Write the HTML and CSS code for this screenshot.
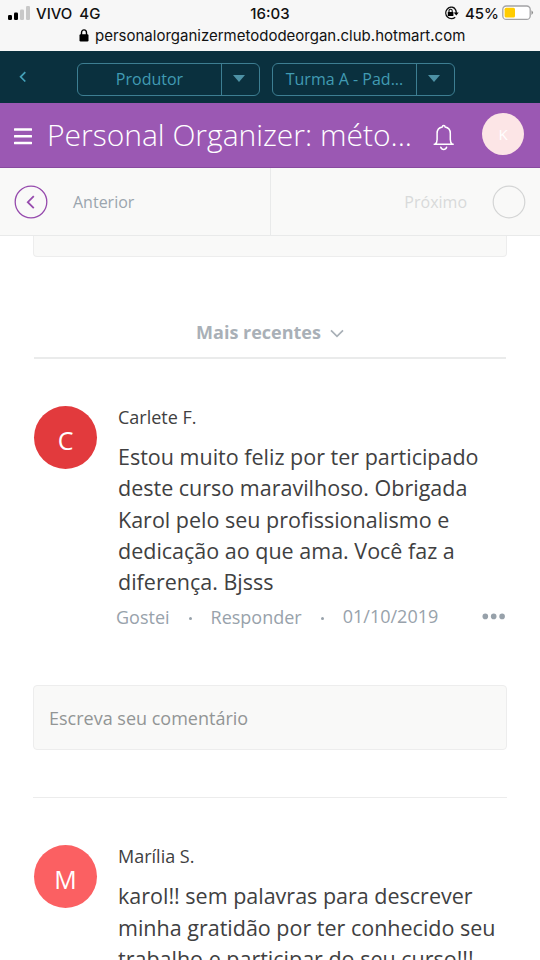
FILE: index.html
```html
<!DOCTYPE html>
<html lang="pt-BR">
<head>
<meta charset="utf-8">
<title>Personal Organizer</title>
<link rel="stylesheet" href="styles.css">
</head>
<body>
<header class="phone">
  <div class="status">
    <div class="carrier">
      <svg width="24" height="14" viewBox="0 0 24 14"><rect x="0" y="9" width="4" height="5" rx="1.2"/><rect x="6" y="6.5" width="4" height="7.5" rx="1.2"/><g fill="#c8c8c8"><rect x="12" y="3.5" width="4" height="10.5" rx="1.2"/><rect x="18" y="0" width="4" height="14" rx="1.2"/></g></svg>
      <span class="carrier-name">VIVO</span><span class="network">4G</span>
    </div>
    <time class="clock">16:03</time>
    <div class="power">
      <svg width="15" height="14" viewBox="0 0 15 14"><path d="M10.6 2.1A5.7 5.7 0 1 0 11.2 11.2M8 1.1A5.8 5.8 0 0 1 12.2 7.2" fill="none" stroke="#111" stroke-width="1.4"/><path d="M9.7 6.5h5l-2.4 3z"/><rect x="3.8" y="6" width="5.6" height="4" rx=".6"/><path d="M5 6V4.8a1.6 1.6 0 0 1 3.2 0V6" fill="none" stroke="#111" stroke-width="1.1"/></svg>
      <span class="percent">45%</span>
      <svg class="battery" width="32" height="16" viewBox="0 0 32 16"><rect x=".8" y="1" width="27.4" height="13.4" rx="3.5" fill="#fff" stroke="#a3a3a5" stroke-width="1.3"/><rect x="2.6" y="2.8" width="10.4" height="9.8" rx="1.5" fill="#fc0"/><path d="M29.5 5.2q3 2.4 0 4.8z" fill="#888"/></svg>
    </div>
  </div>
  <div class="address">
    <svg width="10" height="13" viewBox="0 0 10 13"><rect x=".5" y="5.3" width="9" height="7.2" rx="1.2"/><path d="M2.5 6V3.8a2.5 2.9 0 0 1 5 0V6" fill="none" stroke="#000" stroke-width="1.4"/></svg>
    <span class="url">personalorganizermetododeorgan.club.hotmart.com</span>
  </div>
</header>
<div class="switcher">
  <svg class="back" width="8" height="12" viewBox="0 0 8 12"><path d="M6.3 1.2L1.6 5.8L6.3 10.5" fill="none" stroke="#43a0b8" stroke-width="1.7"/></svg>
  <div class="select"><span class="select-label"><span class="role">Produtor</span></span><span class="arrow"><i></i></span></div>
  <div class="select second"><span class="select-label"><span class="group">Turma A - Pad...</span></span><span class="arrow"><i></i></span></div>
</div>
<div class="titlebar">
  <svg class="menu" width="18" height="17" viewBox="0 0 18 17"><path d="M.8 1.5h16.4M.8 8.3h16.4M.8 15h16.4" stroke="#fff" stroke-width="2.5" stroke-linecap="round"/></svg>
  <h1 class="title"><span>Personal Organizer: méto...</span></h1>
  <svg class="bell" width="22" height="27" viewBox="0 0 22 27" fill="none" stroke="#fff" stroke-width="1.5" stroke-linejoin="round" stroke-linecap="round"><path d="M1.2 20.2h19M2.2 20c1.4-1 1.9-2.3 1.9-4.5V9.3C4.1 6 6.3 3.5 9.3 3c.1-2 2.7-2 2.8 0 3 .5 5.2 3 5.2 6.3v6.2c0 2.2.5 3.5 1.9 4.5M7.8 23.3c.9 3 4.9 3 5.8 0"/></svg>
  <div class="user">K</div>
</div>
<nav class="pager">
  <div class="previous"><svg width="34" height="34" viewBox="0 0 34 34" fill="none" stroke="#964bad"><circle cx="17" cy="17" r="15.8" stroke-width="1.3"/><path d="M19.8 11.2l-6 6 6 6" stroke-width="1.8"/></svg><span class="nav-text prev-text">Anterior</span></div>
  <div class="next"><span class="nav-text next-text">Próximo</span><svg width="34" height="34" viewBox="0 0 34 34" fill="none"><circle cx="17" cy="17" r="15.8" stroke="#d4d5d5" stroke-width="1.2"/></svg></div>
</nav>
<main class="content">
  <div class="field-end"></div>
  <div class="sort"><span class="sort-label">Mais recentes</span><svg width="14" height="9" viewBox="0 0 14 9"><path d="M1 1.4l6 6 6-6" fill="none" stroke="#a9b0b7" stroke-width="1.7"/></svg></div>
  <article class="comment">
    <div class="avatar">C</div>
    <div class="body">
      <h2 class="name"><span class="n1">Carlete F.</span></h2>
      <p class="text"><span class="a1">Estou muito feliz por ter participado</span><br><span class="a2">deste curso maravilhoso. Obrigada</span><br><span class="a3">Karol pelo seu profissionalismo e</span><br><span class="a4">dedicação ao que ama. Você faz a</span><br><span class="a5">diferença. Bjsss</span></p>
      <div class="actions"><span class="like">Gostei</span><i class="dot"></i><span class="reply">Responder</span><i class="dot"></i><time class="date">01/10/2019</time><svg class="more" width="24" height="7" viewBox="0 0 24 7" fill="#97a1aa"><circle cx="3.3" cy="3.4" r="2.8"/><circle cx="11.7" cy="3.4" r="2.8"/><circle cx="20.1" cy="3.4" r="2.8"/></svg></div>
    </div>
  </article>
  <div class="field"><span class="hint">Escreva seu comentário</span></div>
  <hr class="rule">
  <article class="comment">
    <div class="avatar coral">M</div>
    <div class="body">
      <h2 class="name"><span class="n2">Marília S.</span></h2>
      <p class="text"><span class="b1">karol!! sem palavras para descrever</span><br><span class="b2">minha gratidão por ter conhecido seu</span><br><span class="b3">trabalho e participar do seu curso!!!</span></p>
    </div>
  </article>
</main>
</body>
</html>
```
FILE: styles.css
```css
* { box-sizing: border-box; }
body { margin: 0; width: 540px; height: 960px; overflow: hidden; display: flex; flex-direction: column; background: #fff; color: #404041; font-family: "Open Sans", sans-serif; }
svg { display: block; flex: none; }
span, time { white-space: nowrap; }
.phone { flex: none; height: 51px; background: #f7f7f7; color: #111; font-family: Inter, sans-serif; }
.status { height: 26px; display: grid; grid-template-columns: 1fr auto 1fr; align-items: center; font-size: 15px; font-weight: 500; }
.carrier { display: flex; align-items: center; padding-left: 8px; }
.carrier-name { margin-left: 4px; }
.network { margin-left: 7px; }
.power { display: flex; align-items: center; justify-content: flex-end; padding-right: 6px; }
.percent { margin-left: 6px; }
.battery { margin-left: 3px; }
.address { height: 20px; margin-top: -1px; display: flex; align-items: center; padding-left: 79px; font-size: 15px; }
.url { margin-left: 6px; }
.switcher { flex: none; height: 52px; background: #0a303e; display: flex; align-items: center; padding-left: 19px; }
.select { width: 183px; height: 33px; margin: 4px 0 0 50px; border: 1px solid #3d7e92; border-radius: 6px; display: flex; color: #419bb3; font-size: 16px; }
.second { margin-left: 12px; }
.select-label { flex: 1; display: flex; align-items: center; justify-content: center; }
.arrow { width: 38px; border-left: 1px solid #3d7e92; display: flex; align-items: center; justify-content: center; }
.arrow i { border: 6px solid transparent; border-top: 7px solid #4d91a5; border-bottom: 0; margin-right: 3px; margin-top: -2px; }
.titlebar { flex: none; height: 65px; background: #9b58b3; border-bottom: 1px solid #884a9f; display: flex; align-items: center; padding-left: 14px; color: #fff; }
.menu { margin-top: 3px; }
.title { margin: 0 0 0 15px; width: 347px; font-size: 30px; font-weight: 300; line-height: 60px; }
.bell { margin: 4px 0 0 39px; }
.user { width: 42px; height: 42px; margin: -3px 0 0 27px; border-radius: 50%; background: #fce5e6; display: flex; align-items: center; justify-content: center; font-size: 15px; }
.pager { flex: none; height: 68px; background: #f9f9f8; border-bottom: 1px solid #e9eaea; display: grid; grid-template-columns: 271px 1fr; }
.previous, .next { display: flex; align-items: center; color: #9ba5ae; font-size: 16px; }
.previous { padding-left: 14px; border-right: 1px solid #e9eaea; }
.prev-text { margin-left: 25px; }
.next { justify-content: flex-end; padding-right: 14px; color: #d8dada; }
.next-text { margin-right: 25px; }
.content { padding: 0 33px; }
.field-end { height: 21px; background: #f9f9f8; border: 1px solid #ededed; border-top: 0; border-radius: 0 0 4px 4px; }
.sort { height: 102px; margin: 0 1px; border-bottom: 2px solid #eaebeb; display: flex; align-items: center; justify-content: center; padding-top: 50px; color: #a9b0b7; font-size: 18px; font-weight: 700; }
.sort svg { margin: 3px 0 0 9px; }
.comment { display: flex; padding: 46px 1px 0; }
.avatar { flex: none; width: 63px; height: 63px; margin-top: 1px; border-radius: 50%; background: #e23a3d; display: flex; align-items: center; justify-content: center; padding-top: 4px; color: #fff; font-size: 25px; }
.coral { background: #fb6062; }
.body { flex: 1; margin-left: 21px; }
.name { margin: 0; height: 36px; font-size: 18px; line-height: 25px; font-weight: 400; }
.text { margin: 0; font-size: 21.5px; line-height: 31.3px; }
.actions { height: 40px; display: flex; align-items: center; margin-left: -2px; color: #98a2ab; font-size: 18px; }
.dot { width: 3px; height: 3px; border-radius: 50%; background: #98a2ab; margin: 2px 19px 0; }
.date { margin-top: -2px; }
.more { margin: -2px 0 0 auto; }
.field { height: 65px; margin-top: 48px; border: 1px solid #ededed; border-radius: 4px; background: #f9f9f8; display: flex; align-items: center; padding-left: 15px; color: #929595; font-size: 18px; }
.rule { height: 1px; margin: 47px 0 0; border: 0; background: #ececec; }
```
